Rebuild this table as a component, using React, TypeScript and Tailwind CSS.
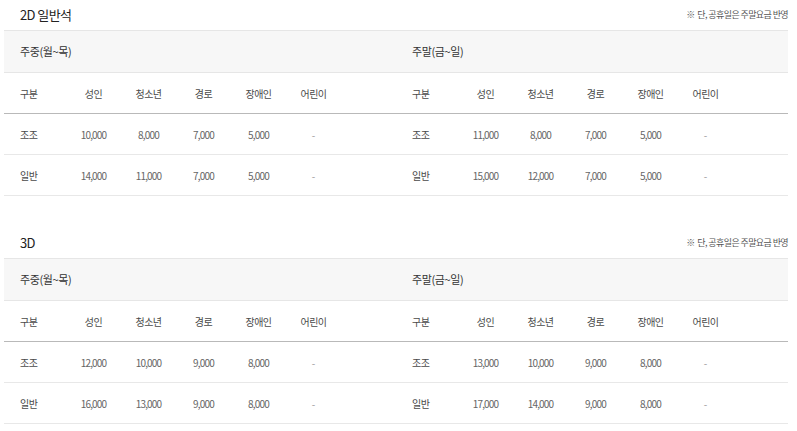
import React from "react";

type Half = {
  label: string;
  rows: { name: string; values: string[] }[];
};

type Section = {
  title: string;
  halves: Half[];
};

const COLUMNS = ["성인", "청소년", "경로", "장애인", "어린이"];

const SECTIONS: Section[] = [
  {
    title: "2D 일반석",
    halves: [
      {
        label: "주중(월~목)",
        rows: [
          { name: "조조", values: ["10,000", "8,000", "7,000", "5,000", "-"] },
          { name: "일반", values: ["14,000", "11,000", "7,000", "5,000", "-"] },
        ],
      },
      {
        label: "주말(금~일)",
        rows: [
          { name: "조조", values: ["11,000", "8,000", "7,000", "5,000", "-"] },
          { name: "일반", values: ["15,000", "12,000", "7,000", "5,000", "-"] },
        ],
      },
    ],
  },
  {
    title: "3D",
    halves: [
      {
        label: "주중(월~목)",
        rows: [
          { name: "조조", values: ["12,000", "10,000", "9,000", "8,000", "-"] },
          { name: "일반", values: ["16,000", "13,000", "9,000", "8,000", "-"] },
        ],
      },
      {
        label: "주말(금~일)",
        rows: [
          { name: "조조", values: ["13,000", "10,000", "9,000", "8,000", "-"] },
          { name: "일반", values: ["17,000", "14,000", "9,000", "8,000", "-"] },
        ],
      },
    ],
  },
];

const grid = "grid grid-cols-[62px_55px_55px_55px_55px_55px_1fr] items-center";

function PriceHalf({ half }: { half: Half }) {
  return (
    <div className="flex flex-col">
      <div className="flex h-[43px] items-center border-y border-[#e6e6e6] bg-[#f7f7f7] pl-4 text-[11px] tracking-[-0.4px] text-[#333]">
        {half.label}
      </div>
      <div className={`${grid} h-[41px] border-b border-[#b9b9b9] text-[10px] tracking-[-0.5px] text-[#4a4a4a]`}>
        <span className="pl-4">구분</span>
        {COLUMNS.map((c) => (
          <span key={c} className="text-center">
            {c}
          </span>
        ))}
        <span />
      </div>
      {half.rows.map((row) => (
        <div key={row.name} className={`${grid} h-[41px] border-b border-[#e8e8e8]`}>
          <span className="pl-4 text-[10px] tracking-[-0.5px] text-[#4a4a4a]">{row.name}</span>
          {row.values.map((v, i) => (
            <span
              key={i}
              className={
                v === "-"
                  ? "text-center text-[10px] text-[#9a9a9a]"
                  : "text-center text-[10px] tracking-[-0.8px] text-[#666]"
              }
            >
              {v}
            </span>
          ))}
          <span />
        </div>
      ))}
    </div>
  );
}

export default function App() {
  return (
    <div
      className="flex min-h-screen w-[797px] flex-col gap-[32px] bg-white pl-[4px] pr-[9px]"
      style={{ fontFamily: '"Noto Sans CJK KR", "Noto Sans", sans-serif' }}
    >
      {SECTIONS.map((section) => (
        <section key={section.title}>
          <div className="flex h-[30px] items-center justify-between">
            <h2 className="pl-4 text-[13px] tracking-[-0.6px] text-[#222]">{section.title}</h2>
            <p className="text-[9px] tracking-[-0.6px] text-[#555]">※&nbsp; 단, 공휴일은 주말요금 반영</p>
          </div>
          <div className="grid grid-cols-2">
            {section.halves.map((half) => (
              <PriceHalf key={half.label} half={half} />
            ))}
          </div>
        </section>
      ))}
    </div>
  );
}
